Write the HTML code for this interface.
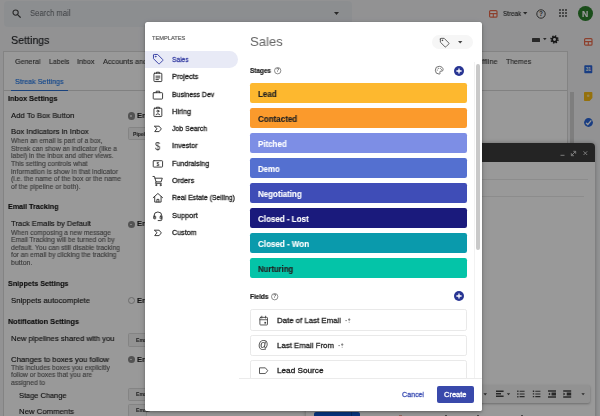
<!DOCTYPE html>
<html lang="en"><head><meta charset="utf-8"><title>Streak - Create pipeline from template</title>
<style>
html,body{margin:0;padding:0}
body{width:600px;height:416px;overflow:hidden;position:relative;background:#fff;font-family:"Liberation Sans",sans-serif}
.t{position:absolute;white-space:nowrap;line-height:12px;transform-origin:0 50%;will-change:transform}
.a{position:absolute}
svg{position:absolute;overflow:visible}
#page{position:absolute;left:0;top:0;width:600px;height:416px;overflow:hidden;background:#f3f4f6}
#ov{position:absolute;left:0;top:0;width:600px;height:416px;background:rgba(0,0,0,.4)}
#modal{position:absolute;left:145px;top:22px;width:337px;height:389px;background:#fff;border-radius:2.5px;box-shadow:0 1px 3px rgba(0,0,0,.32),0 2px 8px rgba(0,0,0,.14);overflow:hidden}
.btn{position:absolute;background:#f4f4f4;border:1px solid #dcdcdc;border-radius:1.5px;box-sizing:border-box}
.rad{position:absolute;width:7.4px;height:7.4px;border-radius:50%;box-sizing:border-box}
.rad.on{background:#8a8a8a;border:0}
.rad.on:after{content:"";position:absolute;left:2.8px;top:2.8px;width:1.8px;height:1.8px;border-radius:50%;background:#e8e8e8}
.rad.off{background:#fff;border:.8px solid #b5b5b5}
.bar{position:absolute;left:250.2px;width:216.7px;height:20.9px;border-radius:2.2px}
.fld{position:absolute;left:250.2px;width:216.7px;height:21.2px;border-radius:2.2px;border:1px solid #e9e9e9;box-sizing:border-box;background:#fff}
.ic{fill:none;stroke:#2c2c2c;stroke-width:1.85;stroke-linejoin:round;stroke-linecap:round}
</style></head><body>
<div id="page">
 <!-- search box -->
 <div class="a" style="left:4px;top:1px;width:348px;height:25.5px;border-radius:4px;background:#eaedf1"></div>
 <svg style="left:11.900px;top:9.400px" width="9" height="9" viewBox="0 0 10 10"><circle cx="4" cy="4" r="2.900" fill="none" stroke="#444" stroke-width="1.200"/><path d="M6.200 6.200 L9.200 9.200" stroke="#444" stroke-width="1.300" stroke-linecap="round"/></svg>
 <svg style="left:333.5px;top:12px" width="5" height="3" viewBox="0 0 5 3"><path d="M0 0h5L2.5 3z" fill="#444"/></svg>
 <!-- top right -->
 <svg style="left:489px;top:9.6px" width="8.6" height="7.8" viewBox="0 0 8.6 7.8"><rect x=".6" y=".6" width="7.4" height="6.6" rx="1" fill="#fff" stroke="#ea6a4b" stroke-width="1.2"/><path d="M.6 3.6H8M4.3 3.6V7.2" stroke="#ea6a4b" stroke-width="1.1" fill="none"/></svg>
 <svg style="left:523.3px;top:12.2px" width="4.4" height="2.6" viewBox="0 0 5 3"><path d="M0 0h5L2.5 3z" fill="#444"/></svg>
 <svg style="left:536.3px;top:8.5px" width="10" height="10" viewBox="0 0 10 10"><circle cx="5" cy="5" r="4.2" fill="none" stroke="#444" stroke-width="1"/><text x="5" y="7.3" font-size="6.4" font-weight="700" text-anchor="middle" fill="#444" font-family="Liberation Sans, sans-serif">?</text></svg>
 <svg style="left:558.7px;top:9.3px" width="8" height="8" viewBox="0 0 8 8" fill="#444"><circle cx="1" cy="1" r=".95"/><circle cx="4" cy="1" r=".95"/><circle cx="7" cy="1" r=".95"/><circle cx="1" cy="4" r=".95"/><circle cx="4" cy="4" r=".95"/><circle cx="7" cy="4" r=".95"/><circle cx="1" cy="7" r=".95"/><circle cx="4" cy="7" r=".95"/><circle cx="7" cy="7" r=".95"/></svg>
 <div class="a" style="left:577.8px;top:6.2px;width:15.2px;height:15.2px;border-radius:50%;background:#2c802c"></div>
 <!-- keyboard + gear -->
 <div class="a" style="left:531.8px;top:38px;width:8px;height:4.4px;background:#444;border-radius:.6px"></div>
 <svg style="left:543px;top:38.2px" width="3.6" height="2.2" viewBox="0 0 5 3"><path d="M0 0h5L2.5 3z" fill="#444"/></svg>
 <svg style="left:550px;top:35px" width="9" height="9" viewBox="-4.5 -4.5 9 9"><circle r="2.3" fill="none" stroke="#222" stroke-width="1.7"/><circle r="3.5" fill="none" stroke="#222" stroke-width="1.5" stroke-dasharray="1.4 1.35"/></svg>
 <!-- settings panel -->
 <div class="a" style="left:3px;top:51.4px;width:564.6px;height:400px;border:1px solid #dadada;box-sizing:border-box;background:#fff"></div>
 <div class="a" style="left:4px;top:90px;width:562.5px;height:1px;background:#d8d8d8"></div>
 <div class="a" style="left:11px;top:89.6px;width:57px;height:.9px;background:#2a6fd0"></div>
 <!-- radios / buttons -->
 <div class="rad on" style="left:127.5px;top:112.4px"></div>
 <div class="btn" style="left:128px;top:127.3px;width:60px;height:13.2px"></div>
 <div class="rad on" style="left:127.5px;top:220.8px"></div>
 <div class="rad off" style="left:127.5px;top:296.8px"></div>
 <div class="btn" style="left:128px;top:333.4px;width:60px;height:13.5px"></div>
 <div class="rad on" style="left:127.5px;top:355.8px"></div>
 <div class="btn" style="left:128px;top:387.5px;width:60px;height:13.2px"></div>
 <div class="btn" style="left:128px;top:403.6px;width:19px;height:13.2px"></div>
 <!-- page scrollbar -->
 <div class="a" style="left:570px;top:91.5px;width:4.4px;height:330px;background:#d2d2d2"></div>
 
 <!-- right sidebar icons -->
 <svg style="left:584.2px;top:38.2px" width="8.6" height="7.8" viewBox="0 0 8.6 7.8"><rect x=".6" y=".6" width="7.4" height="6.6" rx="1" fill="#fff" stroke="#ea6a4b" stroke-width="1.2"/><path d="M.6 3.6H8M4.3 3.6V7.2" stroke="#ea6a4b" stroke-width="1.1" fill="none"/></svg>
 <svg style="left:584.2px;top:65.2px" width="8.6" height="8.6" viewBox="0 0 8.6 8.6"><rect x=".3" y=".3" width="8" height="8" rx=".8" fill="#2a66d9"/><text x="4.300" y="6.300" font-size="4.800" font-weight="700" text-anchor="middle" fill="#fff" font-family="Liberation Sans, sans-serif">31</text></svg>
 <svg style="left:584.4px;top:91.6px" width="8.4" height="9" viewBox="0 0 8.4 9"><path d="M.8 0H7.6a.8.8 0 0 1 .8.8V6L5.6 9H.8A.8.8 0 0 1 0 8.200V.8A.8.8 0 0 1 .8 0z" fill="#f9bc15"/><circle cx="4.2" cy="3.8" r="1.3" fill="#fde293"/></svg>
 <svg style="left:584px;top:118px" width="9" height="9" viewBox="0 0 9 9"><circle cx="4.500" cy="4.500" r="4.400" fill="#2a66d9"/><path d="M2.400 5.200 L3.800 6.500 L6.900 2.800" stroke="#fff" stroke-width="1.300" fill="none" stroke-linecap="round"/></svg>
 <!-- compose window -->
 <div class="a" style="left:306px;top:143px;width:289px;height:300px;background:#fff;border-radius:4px 4px 0 0;box-shadow:0 0 4px rgba(0,0,0,.3)"></div>
 <div class="a" style="left:306px;top:143px;width:289px;height:19px;background:#3c3c3c;border-radius:4px 4px 0 0"></div>
 <svg style="left:559px;top:147px" width="32" height="12" viewBox="0 0 32 12" stroke="#ddd" stroke-width=".9" fill="none"><path d="M1.500 8.300H5.500"/><path d="M12.500 8.500L16.500 4.500M14.300 4.300H16.700V6.700M14.900 8.700H12.300V6.200"/><path d="M24.500 4.300L28.200 8M28.200 4.300L24.500 8"/></svg>
 <div class="a" style="left:310px;top:179.2px;width:278px;height:1px;background:#e9e9e9"></div>
 <div class="a" style="left:310px;top:196.3px;width:274px;height:1px;background:#e9e9e9"></div>
 <div class="a" style="left:318px;top:384.8px;width:272px;height:17.8px;background:#f4f4f4;border-radius:2px;box-shadow:0 1px 2.500px rgba(0,0,0,.3)"></div>
 <svg style="left:480px;top:389px" width="110" height="10" viewBox="480 389 110 10" fill="#444">
  <path d="M483.400 393.200h3.600l-1.800 2.200z"/>
  <path d="M496 390.500h7.600v1.500H496zM496 393h5v1.500h-5zM496 395.500h7.600v1.500H496z"/>
  <path d="M506.800 393.200h3.400l-1.700 2.100z"/>
  <path d="M519.600 390.700h5v1.100h-5zM519.600 393.400h5v1.100h-5zM519.600 396.100h5v1.100h-5zM517.200 390.500h1.300v1.500h-1.300zM517.200 393.200h1.300v1.500h-1.300zM517.200 395.900h1.300v1.500h-1.300z"/>
  <path d="M535.300 390.700h5.100v1.100h-5.100zM535.300 393.400h5.100v1.100h-5.100zM535.300 396.100h5.100v1.100h-5.100zM532.800 390.500h1.400v1.400h-1.400zM532.800 393.200h1.400v1.400h-1.400zM532.800 395.900h1.400v1.400h-1.400z"/>
  <path d="M548 390.300h8v1.400h-8zM548 396.300h8v1.400h-8zM551.500 392.500h4.500v3h-4.500zM550.200 392.600v2.800L548.200 394z"/>
  <path d="M563.200 390.300h8v1.400h-8zM563.200 396.300h8v1.400h-8zM566.700 392.500h4.500v3h-4.500zM563.400 392.600v2.800l2-1.400z"/>
  <path d="M581.400 393.200h3.400l-1.700 2.100z"/>
 </svg>
 <div class="a" style="left:314px;top:411.5px;width:46px;height:10px;background:#0b57d0;border-radius:2px"></div>
 <div class="a" style="left:350.500px;top:411.5px;width:.8px;height:10px;background:#0842a0"></div>

 <div class="a" style="left:398.500px;top:414.800px;width:3px;height:1.200px;background:#eba897"></div>
 <div class="a" style="left:426.500px;top:414.500px;width:3px;height:1.500px;background:#fff"></div>
 <div class="a" style="left:445px;top:415px;width:2px;height:1px;background:#777"></div>
 <div class="a" style="left:477px;top:415px;width:2px;height:1px;background:#777"></div>
 <div class="a" style="left:521px;top:415px;width:2px;height:1px;background:#777"></div>
<span class="t" style="left:30.00px;top:7.10px;font-size:8.6px;font-weight:400;color:#666a6f;-webkit-text-stroke:0.01px #666a6f;transform:scaleX(0.8926);">Search mail</span>
<span class="t" style="left:10.50px;top:34.20px;font-size:11.2px;font-weight:400;color:#202124;-webkit-text-stroke:0.14px #202124;transform:scaleX(0.9521);">Settings</span>
<span class="t" style="left:15.00px;top:55.70px;font-size:7.6px;font-weight:400;color:#444;-webkit-text-stroke:0.14px #444;transform:scaleX(0.9434);">General</span>
<span class="t" style="left:48.50px;top:55.70px;font-size:7.6px;font-weight:400;color:#444;-webkit-text-stroke:0.14px #444;transform:scaleX(0.9156);">Labels</span>
<span class="t" style="left:77.00px;top:55.70px;font-size:7.6px;font-weight:400;color:#444;-webkit-text-stroke:0.14px #444;transform:scaleX(0.9420);">Inbox</span>
<span class="t" style="left:103.00px;top:55.70px;font-size:7.6px;font-weight:400;color:#444;-webkit-text-stroke:0.14px #444;transform:scaleX(0.9619);">Accounts and Import</span>
<span class="t" style="left:482.00px;top:55.70px;font-size:7.6px;font-weight:400;color:#444;-webkit-text-stroke:0.14px #444;transform:scaleX(0.9745);">ffline</span>
<span class="t" style="left:505.70px;top:55.70px;font-size:7.6px;font-weight:400;color:#444;-webkit-text-stroke:0.14px #444;transform:scaleX(0.9148);">Themes</span>
<span class="t" style="left:15.00px;top:75.80px;font-size:7.4px;font-weight:400;color:#1a73e8;-webkit-text-stroke:0.14px #1a73e8;transform:scaleX(0.9676);">Streak Settings</span>
<span class="t" style="left:7.50px;top:93.20px;font-size:8.1px;font-weight:700;color:#111;-webkit-text-stroke:0.12px #111;transform:scaleX(0.8876);">Inbox Settings</span>
<span class="t" style="left:11.00px;top:109.50px;font-size:7.8px;font-weight:400;color:#1a1a1a;-webkit-text-stroke:0.14px #1a1a1a;transform:scaleX(0.9852);">Add To Box Button</span>
<span class="t" style="left:137.40px;top:110.00px;font-size:7.7px;font-weight:700;color:#222;-webkit-text-stroke:0.12px #222;transform:scaleX(0.9530);">Enabled</span>
<span class="t" style="left:11.00px;top:126.20px;font-size:7.8px;font-weight:400;color:#1a1a1a;-webkit-text-stroke:0.14px #1a1a1a;transform:scaleX(0.9824);">Box Indicators in Inbox</span>
<span class="t" style="left:132.60px;top:127.70px;font-size:5.1px;font-weight:700;color:#444;-webkit-text-stroke:0.12px #444;transform:scaleX(0.9823);">Pipeline</span>
<span class="t" style="left:11.00px;top:134.90px;font-size:7.0px;font-weight:400;color:#666;-webkit-text-stroke:0.14px #666;transform:scaleX(0.9482);">When an email is part of a box,</span>
<span class="t" style="left:11.00px;top:142.55px;font-size:7.0px;font-weight:400;color:#666;-webkit-text-stroke:0.14px #666;transform:scaleX(0.9593);">Streak can show an indicator (like a</span>
<span class="t" style="left:11.00px;top:150.20px;font-size:7.0px;font-weight:400;color:#666;-webkit-text-stroke:0.14px #666;transform:scaleX(0.9509);">label) in the inbox and other views.</span>
<span class="t" style="left:11.00px;top:157.85px;font-size:7.0px;font-weight:400;color:#666;-webkit-text-stroke:0.14px #666;transform:scaleX(0.9685);">This setting controls what</span>
<span class="t" style="left:11.00px;top:165.50px;font-size:7.0px;font-weight:400;color:#666;-webkit-text-stroke:0.14px #666;transform:scaleX(0.9786);">information is show in that indicator</span>
<span class="t" style="left:11.00px;top:173.15px;font-size:7.0px;font-weight:400;color:#666;-webkit-text-stroke:0.14px #666;transform:scaleX(0.9582);">(i.e. the name of the box or the name</span>
<span class="t" style="left:11.00px;top:180.80px;font-size:7.0px;font-weight:400;color:#666;-webkit-text-stroke:0.14px #666;transform:scaleX(0.9705);">of the pipeline or both).</span>
<span class="t" style="left:7.50px;top:201.20px;font-size:8.1px;font-weight:700;color:#111;-webkit-text-stroke:0.12px #111;transform:scaleX(0.8838);">Email Tracking</span>
<span class="t" style="left:11.00px;top:217.80px;font-size:7.8px;font-weight:400;color:#1a1a1a;-webkit-text-stroke:0.14px #1a1a1a;transform:scaleX(0.9751);">Track Emails by Default</span>
<span class="t" style="left:137.40px;top:218.30px;font-size:7.7px;font-weight:700;color:#222;-webkit-text-stroke:0.12px #222;transform:scaleX(0.9530);">Enabled</span>
<span class="t" style="left:11.00px;top:226.50px;font-size:7.0px;font-weight:400;color:#666;-webkit-text-stroke:0.14px #666;transform:scaleX(0.9494);">When composing a new message</span>
<span class="t" style="left:11.00px;top:234.15px;font-size:7.0px;font-weight:400;color:#666;-webkit-text-stroke:0.14px #666;transform:scaleX(0.9568);">Email Tracking will be turned on by</span>
<span class="t" style="left:11.00px;top:241.80px;font-size:7.0px;font-weight:400;color:#666;-webkit-text-stroke:0.14px #666;transform:scaleX(0.9692);">default. You can still disable tracking</span>
<span class="t" style="left:11.00px;top:249.45px;font-size:7.0px;font-weight:400;color:#666;-webkit-text-stroke:0.14px #666;transform:scaleX(0.9666);">for an email by clicking the tracking</span>
<span class="t" style="left:11.00px;top:257.10px;font-size:7.0px;font-weight:400;color:#666;-webkit-text-stroke:0.14px #666;transform:scaleX(1.0036);">button.</span>
<span class="t" style="left:7.50px;top:278.00px;font-size:8.1px;font-weight:700;color:#111;-webkit-text-stroke:0.12px #111;transform:scaleX(0.8850);">Snippets Settings</span>
<span class="t" style="left:11.00px;top:294.60px;font-size:7.8px;font-weight:400;color:#1a1a1a;-webkit-text-stroke:0.14px #1a1a1a;transform:scaleX(0.9959);">Snippets autocomplete</span>
<span class="t" style="left:137.40px;top:294.50px;font-size:7.7px;font-weight:700;color:#222;-webkit-text-stroke:0.12px #222;transform:scaleX(0.9530);">Enabled</span>
<span class="t" style="left:7.50px;top:315.50px;font-size:8.1px;font-weight:700;color:#111;-webkit-text-stroke:0.12px #111;transform:scaleX(0.9021);">Notification Settings</span>
<span class="t" style="left:11.00px;top:332.70px;font-size:7.8px;font-weight:400;color:#1a1a1a;-webkit-text-stroke:0.14px #1a1a1a;transform:scaleX(0.9826);">New pipelines shared with you</span>
<span class="t" style="left:135.80px;top:334.20px;font-size:5.1px;font-weight:700;color:#444;-webkit-text-stroke:0.12px #444;transform:scaleX(0.9857);">Email</span>
<span class="t" style="left:11.00px;top:353.70px;font-size:7.8px;font-weight:400;color:#1a1a1a;-webkit-text-stroke:0.14px #1a1a1a;transform:scaleX(0.9829);">Changes to boxes you follow</span>
<span class="t" style="left:137.40px;top:353.60px;font-size:7.7px;font-weight:700;color:#222;-webkit-text-stroke:0.12px #222;transform:scaleX(0.9530);">Enabled</span>
<span class="t" style="left:11.00px;top:361.70px;font-size:7.0px;font-weight:400;color:#666;-webkit-text-stroke:0.14px #666;transform:scaleX(0.9601);">This includes boxes you explicitly</span>
<span class="t" style="left:11.00px;top:369.25px;font-size:7.0px;font-weight:400;color:#666;-webkit-text-stroke:0.14px #666;transform:scaleX(0.9462);">follow or boxes that you are</span>
<span class="t" style="left:11.00px;top:376.80px;font-size:7.0px;font-weight:400;color:#666;-webkit-text-stroke:0.14px #666;transform:scaleX(0.9494);">assigned to</span>
<span class="t" style="left:18.50px;top:390.20px;font-size:7.8px;font-weight:400;color:#1a1a1a;-webkit-text-stroke:0.14px #1a1a1a;transform:scaleX(0.9527);">Stage Change</span>
<span class="t" style="left:135.80px;top:388.00px;font-size:5.1px;font-weight:700;color:#444;-webkit-text-stroke:0.12px #444;transform:scaleX(0.9857);">Email</span>
<span class="t" style="left:18.50px;top:406.30px;font-size:7.8px;font-weight:400;color:#1a1a1a;-webkit-text-stroke:0.14px #1a1a1a;transform:scaleX(0.9915);">New Comments</span>
<span class="t" style="left:135.80px;top:404.30px;font-size:5.1px;font-weight:700;color:#444;-webkit-text-stroke:0.12px #444;transform:scaleX(0.9857);">Email</span>
<span class="t" style="left:502.50px;top:8.10px;font-size:7.6px;font-weight:400;color:#333;-webkit-text-stroke:0.14px #333;transform:scaleX(0.8245);">Streak</span>
<span class="t" style="left:582.30px;top:7.90px;font-size:8.6px;font-weight:700;color:#fff;-webkit-text-stroke:0.12px #fff;transform:scaleX(1.0131);">N</span>
</div>
<div id="ov"></div>
<div id="modal">
 <!-- coordinates inside modal are page coords minus (145,22) -->
 <div class="a" style="left:-145px;top:-22px;width:600px;height:416px">
  <div class="a" style="left:145px;top:51.2px;width:93.3px;height:16.8px;border-radius:0 8.4px 8.4px 0;background:#e8eaf6"></div>
  <svg style="left:152.1px;top:53.3px" width="11.8" height="11.8" viewBox="0 0 24 24"><g class="ic" style="stroke:#3a42a5;stroke-width:2"><path d="M3 4.500V11.500L13.200 21.700a1.600 1.600 0 0 0 2.300 0L21.700 15.500a1.600 1.600 0 0 0 0-2.300L11.500 3H4.500A1.500 1.500 0 0 0 3 4.500z"/><circle cx="7.300" cy="7.300" r=".8"/></g></svg>
  <svg style="left:152.1px;top:71.3px" width="11.8" height="11.8" viewBox="0 0 24 24"><g class="ic"><rect x="4" y="4.500" width="16" height="17" rx="1.500"/><path d="M9 4.500V2.500h6v2M8 10.500h8M8 14h8M8 17.500h5"/></g></svg>
  <svg style="left:152.1px;top:88.6px" width="11.8" height="11.8" viewBox="0 0 24 24"><g class="ic"><rect x="2.500" y="7.500" width="19" height="13" rx="1.500"/><path d="M8.500 7.500V4.500h7v3"/></g></svg>
  <svg style="left:152.1px;top:105.9px" width="11.8" height="11.8" viewBox="0 0 24 24"><g class="ic"><rect x="4" y="4.500" width="16" height="17" rx="1.500"/><path d="M9 4.500V2.500h6v2M8 18c0-3 8-3 8 0"/><circle cx="12" cy="10.500" r="2"/></g></svg>
  <svg style="left:152.1px;top:123.2px" width="11.8" height="11.8" viewBox="0 0 24 24"><g class="ic"><path d="M5.500 6.500H14.500L19 12l-4.500 5.500H5.500L9.800 12z"/></g></svg>
  <svg style="left:152.1px;top:157.7px" width="11.8" height="11.8" viewBox="0 0 24 24"><g class="ic"><rect x="2.500" y="5.500" width="19" height="13" rx="1.500"/></g><text x="12" y="16" font-size="10.500" font-weight="700" text-anchor="middle" fill="#333" font-family="Liberation Sans, sans-serif">$</text></svg>
  <svg style="left:152.1px;top:175.0px" width="11.8" height="11.8" viewBox="0 0 24 24"><g class="ic"><path d="M2 3h3l3.200 11h10.300L21 6.500H6.200M8.200 14L7 17h12"/><circle cx="8.500" cy="20.500" r="1.200"/><circle cx="17.500" cy="20.500" r="1.200"/></g></svg>
  <svg style="left:152.1px;top:192.2px" width="11.8" height="11.8" viewBox="0 0 24 24"><g class="ic"><path d="M2.500 11.500L12 3l9.500 8.500M5.500 9.500V20.500h13V9.500M10 20.500v-5.500h4v5.500"/></g></svg>
  <svg style="left:152.1px;top:209.5px" width="11.8" height="11.8" viewBox="0 0 24 24"><g class="ic"><path d="M4 17V12a8 8 0 0 1 16 0v7.500a2 2 0 0 1-2 2h-5.500"/><rect x="4" y="12.500" width="3.500" height="5.500" rx="1"/><rect x="16.500" y="12.500" width="3.500" height="5.500" rx="1"/></g></svg>
  <svg style="left:152.1px;top:226.8px" width="11.8" height="11.8" viewBox="0 0 24 24"><g class="ic"><path d="M5.500 6.500H14.500L19 12l-4.500 5.500H5.500L9.800 12z"/></g></svg>
  <!-- tag dropdown pill -->
  <div class="a" style="left:432px;top:34.800px;width:41.200px;height:14.700px;border-radius:7.400px;background:#f6f6f6"></div>
  <svg style="left:439.200px;top:36.500px" width="10.800" height="10.800" viewBox="0 0 24 24"><g class="ic" style="stroke:#444"><path d="M3 4.500V11.500L13.200 21.700a1.600 1.600 0 0 0 2.300 0L21.700 15.500a1.600 1.600 0 0 0 0-2.300L11.500 3H4.500A1.500 1.500 0 0 0 3 4.500z"/><circle cx="7.300" cy="7.300" r=".8"/></g></svg>
  <svg style="left:457.900px;top:40.800px" width="4.400" height="2.600" viewBox="0 0 5 3"><path d="M0 0h5L2.500 3z" fill="#444"/></svg>
  <!-- help icons -->
  <svg style="left:273.800px;top:67.200px" width="7.400" height="7.400" viewBox="0 0 10 10"><circle cx="5" cy="5" r="4.300" fill="none" stroke="#555" stroke-width=".900"/><text x="5" y="7.300" font-size="6.400" font-weight="700" text-anchor="middle" fill="#555" font-family="Liberation Sans, sans-serif">?</text></svg>
  <svg style="left:270.600px;top:292.800px" width="7.400" height="7.400" viewBox="0 0 10 10"><circle cx="5" cy="5" r="4.300" fill="none" stroke="#555" stroke-width=".900"/><text x="5" y="7.300" font-size="6.400" font-weight="700" text-anchor="middle" fill="#555" font-family="Liberation Sans, sans-serif">?</text></svg>
  <!-- palette + plus -->
  <svg style="left:434.400px;top:65.300px" width="10.400" height="10.400" viewBox="0 0 24 24"><path d="M12 3a9 9 0 1 0 0 18c1.500 0 2.200-1 2.200-2 0-1.300-1-1.600-1-2.700 0-1 .8-1.800 1.800-1.800H17a4 4 0 0 0 4-4C21 6.400 17 3 12 3z" fill="none" stroke="#555" stroke-width="1.900"/><circle cx="7.500" cy="11.500" r="1.300" fill="#555"/><circle cx="10" cy="7.500" r="1.300" fill="#555"/><circle cx="14.500" cy="7.500" r="1.300" fill="#555"/><circle cx="17.300" cy="11" r="1.300" fill="#555"/></svg>
  <svg style="left:453.900px;top:65.500px" width="10" height="10" viewBox="0 0 10 10"><circle cx="5" cy="5" r="5" fill="#283593"/><path d="M5 2.400V7.600M2.400 5H7.600" stroke="#fff" stroke-width="1.300"/></svg>
  <svg style="left:453.500px;top:291px" width="10" height="10" viewBox="0 0 10 10"><circle cx="5" cy="5" r="5" fill="#283593"/><path d="M5 2.400V7.600M2.400 5H7.600" stroke="#fff" stroke-width="1.300"/></svg>
  <!-- stage bars -->
  <div class="bar" style="top:82.55px;background:#fdb82f"></div>
  <div class="bar" style="top:107.55px;background:#fb9a2c"></div>
  <div class="bar" style="top:132.55px;background:#7d8ee5"></div>
  <div class="bar" style="top:157.55px;background:#5470d0"></div>
  <div class="bar" style="top:182.55px;background:#3f4db7"></div>
  <div class="bar" style="top:207.55px;background:#1a1a7c"></div>
  <div class="bar" style="top:232.55px;background:#0a9aac"></div>
  <div class="bar" style="top:257.55px;background:#04c4a8"></div>
  <!-- fields -->
  <div class="fld" style="top:309.400px"></div>
  <div class="fld" style="top:334.500px"></div>
  <div class="fld" style="top:359.700px"></div>
  <svg style="left:257.9px;top:314.7px" width="11.4" height="11.4" viewBox="0 0 24 24"><g class="ic" style="stroke:#444"><rect x="4" y="5" width="16" height="16" rx="1.500"/><path d="M8 2.500v4M16 2.500v4M4 10h16"/></g><rect x="13.500" y="14.500" width="3.600" height="3.600" fill="#444"/></svg>
  
  <svg style="left:257.9px;top:365.0px" width="11.4" height="11.4" viewBox="0 0 24 24"><g class="ic" style="stroke:#444"><path d="M4 6H15.500L20.500 12l-5 6H4z"/></g></svg>
  <!-- sparkles -->
  <svg style="left:344.500px;top:317.200px" width="6" height="6" viewBox="0 0 6 6" stroke="#666" stroke-width=".7" fill="none"><path d="M.3 3.600H2M4.200 1.200V4M3 2.600H5.400M4.200 4.800v.9"/></svg>
  <svg style="left:337.500px;top:342.300px" width="6" height="6" viewBox="0 0 6 6" stroke="#666" stroke-width=".7" fill="none"><path d="M.3 3.600H2M4.200 1.200V4M3 2.600H5.400M4.200 4.800v.9"/></svg>
  <!-- scrollbar -->
  <div class="a" style="left:474.300px;top:62px;width:.7px;height:316px;background:#f2f2f2"></div>
  <div class="a" style="left:476.200px;top:64.400px;width:3.700px;height:186.100px;border-radius:1.900px;background:#c9c9c9"></div>
  <!-- footer -->
  <div class="a" style="left:145px;top:378px;width:337px;height:33px;background:#fff"></div>
  <div class="a" style="left:239px;top:378px;width:243px;height:1px;background:#ebebeb"></div>
  <div class="a" style="left:436.600px;top:386px;width:37.400px;height:17.200px;border-radius:2px;background:#3949ab"></div>
 </div>
</div>
<span class="t" style="left:152.40px;top:32.30px;font-size:5.7px;font-weight:400;color:#686868;-webkit-text-stroke:0.22px #686868;transform:scaleX(0.9968);">TEMPLATES</span>
<span class="t" style="left:171.80px;top:54.00px;font-size:7.7px;font-weight:400;color:#3a42a5;-webkit-text-stroke:0.3px #3a42a5;transform:scaleX(0.8578);">Sales</span>
<span class="t" style="left:171.80px;top:71.28px;font-size:7.7px;font-weight:400;color:#222;-webkit-text-stroke:0.3px #222;transform:scaleX(0.9431);">Projects</span>
<span class="t" style="left:171.80px;top:88.56px;font-size:7.7px;font-weight:400;color:#222;-webkit-text-stroke:0.3px #222;transform:scaleX(0.8979);">Business Dev</span>
<span class="t" style="left:171.80px;top:105.84px;font-size:7.7px;font-weight:400;color:#222;-webkit-text-stroke:0.3px #222;transform:scaleX(0.9555);">Hiring</span>
<span class="t" style="left:171.80px;top:123.12px;font-size:7.7px;font-weight:400;color:#222;-webkit-text-stroke:0.3px #222;transform:scaleX(0.9051);">Job Search</span>
<span class="t" style="left:171.80px;top:140.40px;font-size:7.7px;font-weight:400;color:#222;-webkit-text-stroke:0.3px #222;transform:scaleX(0.9393);">Investor</span>
<span class="t" style="left:171.80px;top:157.68px;font-size:7.7px;font-weight:400;color:#222;-webkit-text-stroke:0.3px #222;transform:scaleX(0.9260);">Fundraising</span>
<span class="t" style="left:171.80px;top:174.96px;font-size:7.7px;font-weight:400;color:#222;-webkit-text-stroke:0.3px #222;transform:scaleX(0.9447);">Orders</span>
<span class="t" style="left:171.80px;top:192.24px;font-size:7.7px;font-weight:400;color:#222;-webkit-text-stroke:0.3px #222;transform:scaleX(0.8976);">Real Estate (Selling)</span>
<span class="t" style="left:171.80px;top:209.52px;font-size:7.7px;font-weight:400;color:#222;-webkit-text-stroke:0.3px #222;transform:scaleX(0.9541);">Support</span>
<span class="t" style="left:171.80px;top:226.80px;font-size:7.7px;font-weight:400;color:#222;-webkit-text-stroke:0.3px #222;transform:scaleX(0.9321);">Custom</span>
<span class="t" style="left:155.40px;top:140.30px;font-size:10.8px;font-weight:400;color:#333;-webkit-text-stroke:0.01px #333;transform:scaleX(0.8644);">$</span>
<span class="t" style="left:250.40px;top:35.50px;font-size:13.5px;font-weight:400;color:#666;-webkit-text-stroke:0.01px #666;transform:scaleX(0.9710);">Sales</span>
<span class="t" style="left:250.30px;top:64.90px;font-size:6.9px;font-weight:700;color:#222;-webkit-text-stroke:0.22px #222;transform:scaleX(0.9244);">Stages</span>
<span class="t" style="left:250.30px;top:290.50px;font-size:6.9px;font-weight:700;color:#222;-webkit-text-stroke:0.22px #222;transform:scaleX(0.9286);">Fields</span>
<span class="t" style="left:257.80px;top:87.50px;font-size:8.4px;font-weight:700;color:#222;-webkit-text-stroke:0.12px #222;transform:scaleX(0.9559);">Lead</span>
<span class="t" style="left:257.80px;top:112.50px;font-size:8.4px;font-weight:700;color:#222;-webkit-text-stroke:0.12px #222;transform:scaleX(0.9572);">Contacted</span>
<span class="t" style="left:257.80px;top:137.50px;font-size:8.4px;font-weight:700;color:#fff;-webkit-text-stroke:0.12px #fff;transform:scaleX(0.9488);">Pitched</span>
<span class="t" style="left:257.80px;top:162.50px;font-size:8.4px;font-weight:700;color:#fff;-webkit-text-stroke:0.12px #fff;transform:scaleX(0.9321);">Demo</span>
<span class="t" style="left:257.80px;top:187.50px;font-size:8.4px;font-weight:700;color:#fff;-webkit-text-stroke:0.12px #fff;transform:scaleX(0.9487);">Negotiating</span>
<span class="t" style="left:257.80px;top:212.50px;font-size:8.4px;font-weight:700;color:#fff;-webkit-text-stroke:0.12px #fff;transform:scaleX(0.9558);">Closed - Lost</span>
<span class="t" style="left:257.80px;top:237.50px;font-size:8.4px;font-weight:700;color:#fff;-webkit-text-stroke:0.12px #fff;transform:scaleX(0.9595);">Closed - Won</span>
<span class="t" style="left:257.80px;top:262.50px;font-size:8.4px;font-weight:700;color:#222;-webkit-text-stroke:0.12px #222;transform:scaleX(0.9225);">Nurturing</span>
<span class="t" style="left:277.00px;top:314.80px;font-size:8.0px;font-weight:400;color:#222;-webkit-text-stroke:0.3px #222;transform:scaleX(0.9790);">Date of Last Email</span>
<span class="t" style="left:277.00px;top:339.80px;font-size:8.0px;font-weight:400;color:#222;-webkit-text-stroke:0.3px #222;transform:scaleX(0.9788);">Last Email From</span>
<span class="t" style="left:277.00px;top:365.00px;font-size:8.0px;font-weight:400;color:#222;-webkit-text-stroke:0.3px #222;transform:scaleX(1.0248);">Lead Source</span>
<span class="t" style="left:258.30px;top:338.50px;font-size:10.2px;font-weight:400;color:#444;-webkit-text-stroke:0.12px #444;transform:scaleX(1.0054);">@</span>
<span class="t" style="left:402.00px;top:388.80px;font-size:7.2px;font-weight:400;color:#3f51b5;-webkit-text-stroke:0.3px #3f51b5;transform:scaleX(0.9832);">Cancel</span>
<span class="t" style="left:444.00px;top:388.80px;font-size:7.2px;font-weight:400;color:#fff;-webkit-text-stroke:0.3px #fff;transform:scaleX(1.0427);">Create</span>
</body></html>
